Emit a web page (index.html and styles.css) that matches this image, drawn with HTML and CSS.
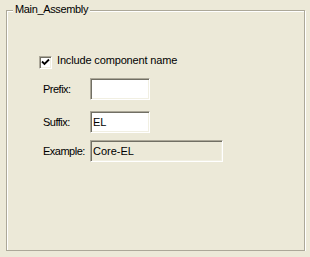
FILE: index.html
```html
<!DOCTYPE html>
<html lang="en">
<head>
    <meta charset="UTF-8">
    <title>Main_Assembly</title>
    <link rel="stylesheet" href="styles.css">
</head>
<body>
    <div class="group">
        <span class="group-title">Main_Assembly</span>

        <label class="check-row">
            <span class="check-box">
                <svg width="9" height="9" viewBox="0 0 9 9">
                    <polyline points="1,3.5 3.5,6 8,1.5" fill="none" stroke="#000" stroke-width="1.8"/>
                </svg>
            </span>
            <span class="check-text">Include component name</span>
        </label>

        <div class="field">
            <span class="field-label">Prefix:</span>
            <input type="text" class="text-box" value="">
        </div>
        <div class="field">
            <span class="field-label">Suffix:</span>
            <input type="text" class="text-box" value="EL">
        </div>
        <div class="field field-example">
            <span class="field-label">Example:</span>
            <input type="text" class="text-box text-box-wide" value="Core-EL" readonly>
        </div>
    </div>
</body>
</html>
```

FILE: styles.css
```css
body {
    margin: 0;
    background-color: #ece9d8;
    font-family: 'Liberation Sans', Arial, sans-serif;
    font-size: 11px;
    line-height: 13px;
    color: #000;
}

.group {
    position: relative;
    box-sizing: border-box;
    width: 299px;
    height: 241px;
    margin: 10px 0 0 6px;
    padding: 45px 0 0 32px;
    border: 1px solid #aca899;
    box-shadow: 1px 1px 0 #fff, inset 1px 1px 0 #fff;
}

.group-title {
    position: absolute;
    top: -8px;
    left: 6px;
    padding: 0 2px;
    letter-spacing: -0.35px;
    background-color: #ece9d8;
}

.check-row {
    display: flex;
    align-items: flex-start;
    gap: 5px;
}

.check-text {
    margin-top: -2px;
    letter-spacing: -0.15px;
}

.check-box {
    box-sizing: border-box;
    width: 13px;
    height: 13px;
    display: flex;
    align-items: center;
    justify-content: center;
    background-color: #fff;
    border: 1px solid;
    border-color: #aca899 #fff #fff #aca899;
    box-shadow: inset 1px 1px 0 #716f64, inset -1px -1px 0 #f1efe2;
}

.field {
    display: flex;
    align-items: center;
    margin-top: 9px;
    padding-left: 4px;
}

.field + .field {
    margin-top: 11px;
}

.field.field-example {
    margin-top: 7px;
}

.field-label {
    width: 47px;
    padding-top: 1px;
    letter-spacing: -0.5px;
}

.text-box {
    box-sizing: border-box;
    width: 60px;
    height: 22px;
    margin: 0;
    padding: 0 2px;
    font: inherit;
    color: #000;
    background-color: #fff;
    border: 1px solid;
    border-color: #aca899 #fff #fff #aca899;
    box-shadow: inset 1px 1px 0 #716f64, inset -1px -1px 0 #f1efe2;
    outline: none;
}

.text-box-wide {
    width: 133px;
    background-color: #ece9d8;
}
```
